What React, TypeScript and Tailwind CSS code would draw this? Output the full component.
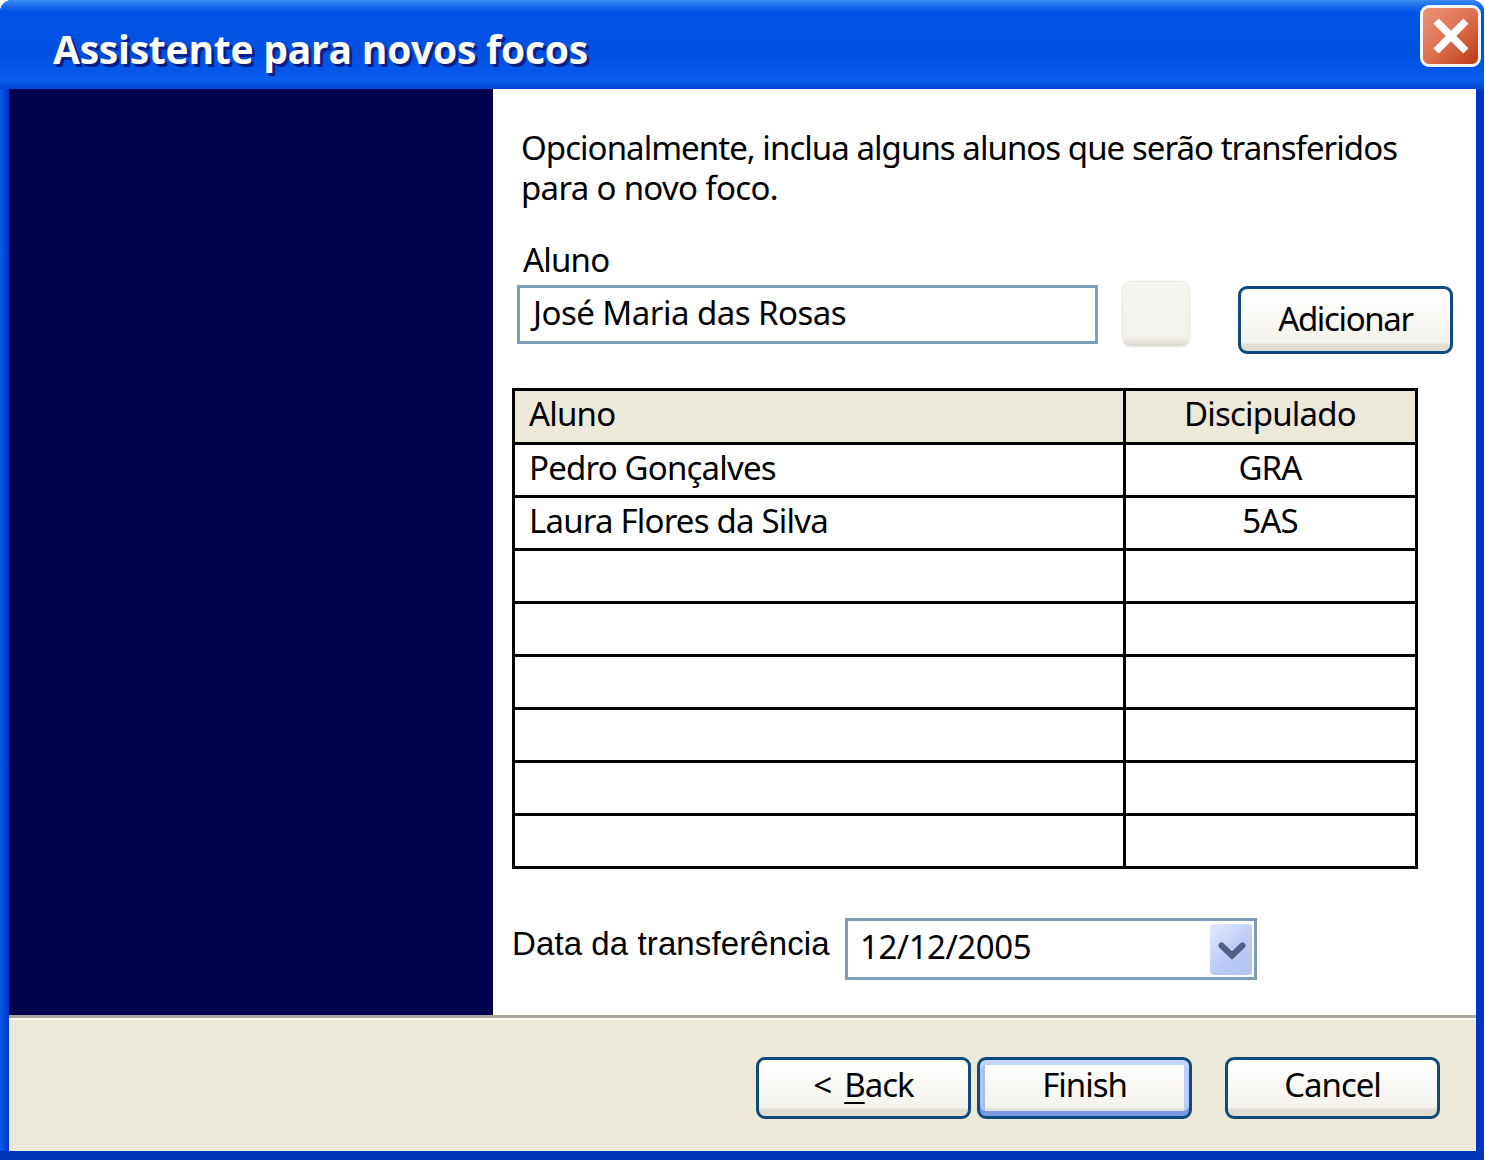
const rows = [
  ['Pedro Gonçalves', 'GRA'],
  ['Laura Flores da Silva', '5AS'],
  ['', ''],
  ['', ''],
  ['', ''],
  ['', ''],
  ['', ''],
  ['', ''],
];

const WizardButton = ({ children, className = '' }: { children: React.ReactNode; className?: string }) => (
  <button className={`flex w-[215px] items-center justify-center rounded-[9px] border-[3px] border-[#0f4a7c] bg-[linear-gradient(180deg,#ffffff_0,#f3f2ec_calc(100%_-_8px),#e0ddd2_calc(100%_-_7px))] text-[33px] text-black ${className}`}>
    {children}
  </button>
);

export default function App() {
  return (
    <div className="flex h-[1160px] w-[1484px] flex-col overflow-hidden rounded-t-[12px] bg-[#0036c4] font-['Noto_Sans',sans-serif] text-black">
      {/* title bar */}
      <div className="flex h-[89px] shrink-0 items-start justify-between bg-[linear-gradient(180deg,#3a8cf2_0%,#1667ec_8%,#0252e4_14%,#0050e0_60%,#0a5cec_90%,#0348d4_100%)] pr-[3px] pl-[53px]">
        <span className="mt-[22px] font-['Open_Sans',sans-serif] text-[39px] leading-[54px] font-bold tracking-[-0.22px] text-white [text-shadow:3px_3px_0_#0c1f86]">
          Assistente para novos focos
        </span>
        <div className="mt-[5px] flex h-[62px] w-[61px] items-center justify-center rounded-[9px] border-[3px] border-[#f4f6fb] bg-[linear-gradient(135deg,#eb9478_0%,#dc7050_50%,#bd3a12_100%)]">
          <svg width="38" height="36" viewBox="0 0 38 36" fill="none">
            <path d="M4 3 L34 33 M34 3 L4 33" stroke="#ffffff" strokeWidth="9" strokeLinecap="square" transform="translate(19 18) scale(.82) translate(-19 -18)" />
          </svg>
        </div>
      </div>

      {/* body between the window borders */}
      <div className="flex min-h-0 flex-1 flex-col border-b-[9px] border-[#0034b8] bg-[linear-gradient(90deg,#0a5cea_0%,#0034c8_0.6%,#0034c8_100%)] pr-[8px] pl-[9px]">
        <div className="flex h-[926px] shrink-0">
          <div className="w-[484px] shrink-0 bg-[#00004f]" />
          <div className="flex flex-1 flex-col bg-white text-[33px] tracking-[-0.8px]">
            <p className="mt-[39px] ml-[28px] leading-[40px]">
              <span className="tracking-[-0.95px]">Opcionalmente, inclua alguns alunos que serão transferidos</span>
              <br />
              <span className="tracking-[-0.68px]">para o novo foco.</span>
            </p>
            <span className="mt-[32px] ml-[30px] leading-[40px]">Aluno</span>

            <div className="mt-[4px] ml-[24px] flex items-start">
              <div className="mt-[1px] flex h-[59px] w-[581px] items-center border-[3px] border-[#7f9db9] pb-[4px] pl-[13px] tracking-[-0.52px]">José Maria das Rosas</div>
              <div className="ml-[25px] h-[64px] w-[66px] -translate-y-[2px] rounded-[8px] bg-[linear-gradient(180deg,#f6f5f0_0%,#f3f2ec_85%,#dcdacd_100%)] shadow-[0_0_3px_#c9c7bb]" />
              <WizardButton className="mt-[2px] ml-[49px] h-[68px] pb-[3px] tracking-[-1.35px]">Adicionar</WizardButton>
            </div>

            <div className="mt-[34px] ml-[19px] w-[906px] border-[3px] border-b-0 border-black">
              <div className="flex h-[54px] border-b-[3px] border-black bg-[#ece9d8]">
                <div className="w-[611px] shrink-0 border-r-[3px] border-black pl-[14px] leading-[46px]">Aluno</div>
                <div className="flex-1 pr-[1px] text-center leading-[46px]">Discipulado</div>
              </div>
              {rows.map((row, i) => (
                <div key={i} className="flex h-[53px] border-b-[3px] border-black">
                  <div className="w-[611px] shrink-0 border-r-[3px] border-black pl-[14px] leading-[46px]">{row[0]}</div>
                  <div className="flex-1 pr-[1px] text-center leading-[46px]">{row[1]}</div>
                </div>
              ))}
            </div>

            <div className="mt-[49px] ml-[19px] flex items-start">
              <span className="w-[333px] shrink-0 font-['Liberation_Sans',sans-serif] leading-[52px] tracking-[0.1px] whitespace-nowrap">Data da transferência</span>
              <div className="flex h-[62px] w-[412px] items-center justify-between border-[3px] border-[#7f9db9] pr-[2px] pl-[12px]">
                <span className="pb-[4px] tracking-[-0.45px]">12/12/2005</span>
                <div className="flex h-[51px] w-[42px] items-center justify-center rounded-[4px] bg-[linear-gradient(135deg,#e1eafe_0%,#b9caf5_60%,#b2c5f3_100%)] pt-[4px] pl-[1px]">
                  <svg width="28" height="18" viewBox="0 0 28 18" fill="none">
                    <path d="M3.5 3.5 L14 13.5 L24.5 3.5" stroke="#4d6185" strokeWidth="6" strokeLinecap="round" strokeLinejoin="miter" />
                  </svg>
                </div>
              </div>
            </div>
          </div>
        </div>

        {/* bottom button strip */}
        <div className="flex flex-1 flex-col border-t-[3px] border-[#aca899] bg-[#ece9d8]">
          <div className="h-[2px] shrink-0 bg-white" />
          <div className="mt-[37px] flex justify-end pr-[36px] tracking-[-1px]">
            <WizardButton className="h-[62px] pb-[6px]">
              &lt;
              <span className="ml-[13px] underline decoration-[2px] underline-offset-[5px]">B</span>ack
            </WizardButton>
            <WizardButton className="ml-[6px] h-[62px] pb-[6px] shadow-[inset_0_-5px_0_#7a9ae6,inset_0_5px_0_#c2d6f6,inset_5px_0_0_#a9c3f1,inset_-5px_0_0_#bcd0f5]">Finish</WizardButton>
            <WizardButton className="ml-[33px] h-[62px] pb-[6px]">Cancel</WizardButton>
          </div>
        </div>
      </div>
    </div>
  );
}
